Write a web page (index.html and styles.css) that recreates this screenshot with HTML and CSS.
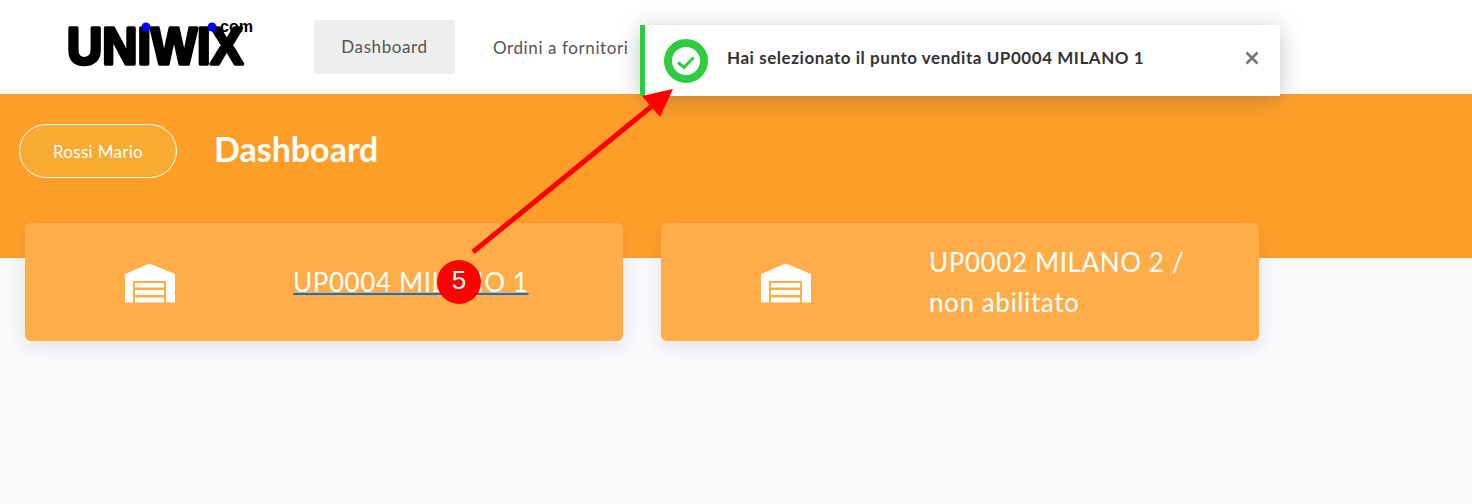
FILE: index.html
```html
<!DOCTYPE html>
<html lang="it">
<head>
<meta charset="utf-8"/>
<title>Uniwix - Dashboard</title>
<link rel="stylesheet" href="styles.css">
</head>
<body>
<header class="topbar">
  <a class="logo" href="#">
    <svg width="200" height="60" viewBox="0 0 200 60">
      <text class="logo-word" x="5" y="50" textLength="176" lengthAdjust="spacingAndGlyphs">UNIWIX</text>
      <text class="logo-com" x="158" y="18" textLength="33" lengthAdjust="spacingAndGlyphs">com</text>
      <circle class="logo-dot" cx="84" cy="13" r="4.5"/>
      <circle class="logo-dot" cx="150" cy="13" r="4.5"/>
    </svg>
  </a>
  <nav class="menu">
    <a class="menu-item active" href="#">Dashboard</a>
    <a class="menu-item" href="#">Ordini a fornitori</a>
  </nav>
</header>

<section class="band">
  <span class="user-pill">Rossi Mario</span>
  <h1 class="page-title">Dashboard</h1>
</section>

<main class="stores">
  <div class="store-card">
    <div class="store-icon">
      <svg width="50" height="40" viewBox="0 0 50 40">
        <path class="wh-body" d="M0 11 L24.5 0.5 L50 11 V39.5 H41 V18 H8 V39.5 H0 Z"/>
        <path class="wh-slats" d="M10 20 H39 V24.500 H10 Z M10 27 H39 V32 H10 Z M10 34.500 H39 V39.500 H10 Z"/>
      </svg>
    </div>
    <a class="store-name store-link" href="#">UP0004 MILANO 1</a>
  </div>
  <div class="store-card">
    <div class="store-icon">
      <svg width="50" height="40" viewBox="0 0 50 40">
        <path class="wh-body" d="M0 11 L24.5 0.5 L50 11 V39.5 H41 V18 H8 V39.5 H0 Z"/>
        <path class="wh-slats" d="M10 20 H39 V24.500 H10 Z M10 27 H39 V32 H10 Z M10 34.500 H39 V39.500 H10 Z"/>
      </svg>
    </div>
    <span class="store-name">UP0002 MILANO 2 / non abilitato</span>
  </div>
</main>

<div class="toast">
  <svg class="toast-icon" width="44" height="44" viewBox="0 0 44 44">
    <circle class="toast-ring" cx="22" cy="22" r="18"/>
    <path class="toast-check" d="M14 23.500 L20 28.500 L29.500 18.500"/>
  </svg>
  <span class="toast-text">Hai selezionato il punto vendita UP0004 MILANO 1</span>
  <svg class="toast-close" width="14" height="14" viewBox="0 0 14 14">
    <path d="M1.500 1.500 L12.500 12.500 M12.500 1.500 L1.500 12.500"/>
  </svg>
</div>

<svg class="arrow" width="1472" height="504" viewBox="0 0 1472 504">
  <line class="arrow-line" x1="473" y1="252" x2="652" y2="106"/>
  <polygon class="arrow-head" points="673,89 642,96 660,117"/>
</svg>
<span class="step-badge">5</span>
</body>
</html>
```

FILE: styles.css
```css
* { box-sizing: border-box; }
html, body { margin: 0; padding: 0; }
body { background: #f9fafc; font-family: Lato, "Liberation Sans", sans-serif; height: 504px; overflow: hidden; position: relative; }
a { color: inherit; text-decoration: none; }

/* top bar */
.topbar { display: flex; align-items: center; height: 94px; background: #fff; padding-left: 62px; }
.logo { display: block; width: 252px; height: 60px; margin-top: -7px; flex: none; }
.logo-word { font-family: "Liberation Sans", sans-serif; font-weight: 700; font-size: 52px; fill: #000; stroke: #000; stroke-width: 3.5px; stroke-linejoin: round; }
.logo-com { font-family: "Liberation Sans", sans-serif; font-weight: 700; font-size: 16px; fill: #000; }
.logo-dot { fill: #0000ff; }
.menu { display: flex; align-items: center; gap: 38px; }
.menu-item { color: #555; font-size: 17px; letter-spacing: 0.6px; white-space: nowrap; }
.menu-item.active { display: flex; align-items: center; justify-content: center; width: 141px; height: 54px; background: #eee; border-radius: 3px; margin-top: -1px; }

/* orange band */
.band { display: flex; align-items: flex-start; height: 164px; background: #ff9f2a; padding: 30px 0 0 19px; }
.user-pill { display: flex; align-items: center; justify-content: center; width: 158px; height: 54px; background: #f7ab32; border: 1px solid #fff; border-radius: 27px; color: #fff; font-size: 17px; letter-spacing: 0.3px; }
.page-title { margin: 0 0 0 37px; color: #fff; font-size: 34px; font-weight: 700; line-height: 50px; }

/* store cards */
.stores { display: grid; grid-template-columns: 598px 598px; gap: 38px; margin: -35px 0 0 25px; }
.store-card { display: flex; align-items: center; height: 118px; background: #ffad48; border-radius: 6px; box-shadow: 0 6px 18px rgba(60, 60, 80, 0.12); color: #fff; }
.store-icon { flex: none; width: 268px; padding: 2px 0 0 100px; }
.store-icon svg { display: block; }
.store-name { width: 300px; font-size: 26px; line-height: 40px; letter-spacing: 0.6px; }
.store-link { width: auto; text-decoration: underline; text-decoration-color: #1a6fd6; text-decoration-thickness: 2px; }
.wh-body { fill: #fff; }
.wh-slats { fill: #fff; }

/* toast */
.toast { position: absolute; left: 640px; top: 25px; display: flex; align-items: center; width: 640px; height: 71px; background: #fff; border-left: 5px solid #2ecc40; box-shadow: 0 4px 22px rgba(40, 50, 70, 0.28); padding-left: 19px; }
.toast-icon { flex: none; margin-top: 0; }
.toast-ring { fill: #fff; stroke: #2ecc40; stroke-width: 8; }
.toast-check { fill: none; stroke: #2ecc40; stroke-width: 3; }
.toast-text { margin: -6px 0 0 19px; color: #333; font-size: 17px; font-weight: 700; letter-spacing: 0.55px; white-space: nowrap; flex: 1; }
.toast-close { flex: none; margin: -6px 21px 0 0; }
.toast-close path { fill: none; stroke: #777; stroke-width: 2.6; }

/* annotation on top of the shot */
.arrow { position: absolute; left: 0; top: 0; pointer-events: none; }
.arrow-line { stroke: #ff0000; stroke-width: 5; }
.arrow-head { fill: #ff0000; }
.step-badge { position: absolute; left: 437px; top: 260px; display: flex; align-items: center; justify-content: center; width: 44px; height: 44px; border-radius: 50%; background: #ff0000; color: #fff; font-family: "Liberation Sans", sans-serif; font-size: 26px; padding-bottom: 4px; }
```
